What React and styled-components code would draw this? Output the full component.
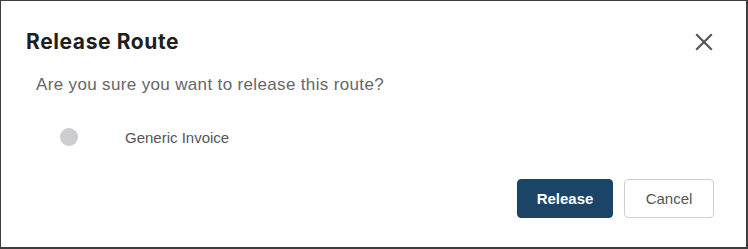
import React from 'react';
import styled, { createGlobalStyle } from 'styled-components';

const GlobalStyle = createGlobalStyle`
    html, body {
        margin: 0;
        padding: 0;
        background: #ffffff;
    }
    * {
        box-sizing: border-box;
    }
`

const Dialog = styled.div`
    width: 748px;
    height: 249px;
    border: 1px solid #3d3d3d;
    border-right-width: 2px;
    border-bottom-width: 2px;
    background: #ffffff;
    display: flex;
    flex-direction: column;
    font-family: "Liberation Sans", Arial, sans-serif;
`

const Header = styled.div`
    display: flex;
    align-items: center;
    justify-content: space-between;
    padding: 28px 30px 0 25px;
    height: 53px;
`

const Title = styled.h2`
    margin: 0;
    font-family: Inter, "Liberation Sans", sans-serif;
    font-size: 21px;
    line-height: 24px;
    font-weight: 700;
    color: #1f1f1f;
    letter-spacing: 0.6px;
`

const CloseButton = styled.button`
    border: 0;
    background: none;
    padding: 0;
    width: 24px;
    height: 24px;
    display: flex;
    align-items: center;
    justify-content: center;
    cursor: pointer;
    color: #555555;
`

const Question = styled.p`
    margin: 21px 0 0 35px;
    font-size: 17px;
    line-height: 20px;
    letter-spacing: 0.35px;
    color: #666666;
`

const OptionRow = styled.label`
    display: flex;
    align-items: center;
    margin: 32px 0 0 59px;
    height: 20px;
`

const Radio = styled.span`
    width: 18px;
    height: 18px;
    border-radius: 50%;
    background: #cdcdcf;
    flex-shrink: 0;
`

const OptionText = styled.span`
    margin-left: 47px;
    font-size: 15px;
    color: #555555;
`

const Footer = styled.div`
    display: flex;
    justify-content: flex-end;
    gap: 11px;
    padding-right: 32px;
    margin-top: 32px;
`

const Button = styled.button`
    height: 39px;
    width: ${props => props.width};
    border-radius: 4px;
    font-family: "Liberation Sans", Arial, sans-serif;
    font-size: 15px;
    cursor: pointer;
    border: 1px solid ${props => props.primary ? '#1b4566' : '#cfcfcf'};
    background: ${props => props.primary ? '#1b4566' : '#ffffff'};
    color: ${props => props.primary ? '#ffffff' : '#555555'};
    font-weight: ${props => props.primary ? 700 : 400};
`

const App = () => (
    <>
        <GlobalStyle />
        <Dialog>
            <Header>
                <Title>Release Route</Title>
                <CloseButton aria-label="Close">
                    <svg width="18" height="18" viewBox="0 0 18 18" fill="none" stroke="currentColor" strokeWidth="2.2" strokeLinecap="square">
                        <path d="M2 2L16 16M16 2L2 16" />
                    </svg>
                </CloseButton>
            </Header>
            <Question>Are you sure you want to release this route?</Question>
            <OptionRow>
                <Radio />
                <OptionText>Generic Invoice</OptionText>
            </OptionRow>
            <Footer>
                <Button primary width="96px">Release</Button>
                <Button width="90px">Cancel</Button>
            </Footer>
        </Dialog>
    </>
)

export default App;
